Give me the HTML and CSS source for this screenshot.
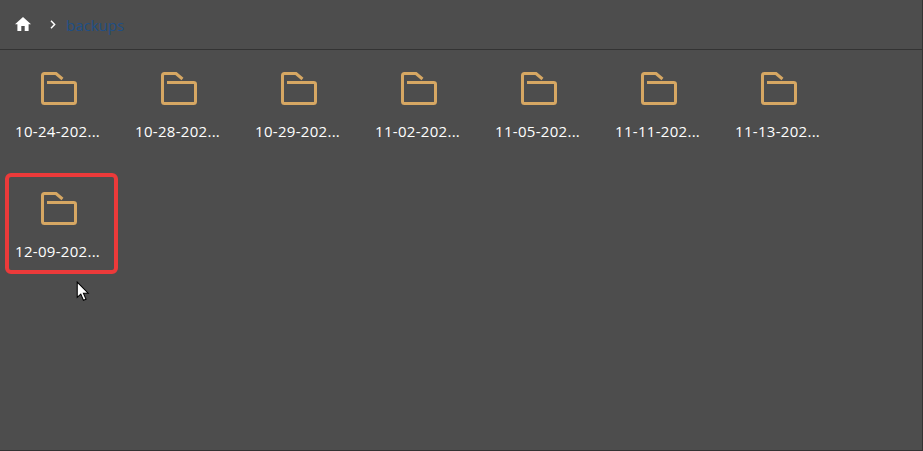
FILE: index.html
```html
<!DOCTYPE html>
<html lang="en">
<head>
  <meta charset="UTF-8" />
  <meta name="viewport" content="width=device-width, initial-scale=1.0" />
  <title>backups</title>
  <link rel="stylesheet" href="styles.css">
</head>
<body>
  <svg width="0" height="0" class="defs">
    <symbol id="folder" viewBox="0 0 38 34">
      <path d="M21.5 7 L15 1.5 H3.5 Q1.5 1.5 1.5 3.5 V29.5 Q1.5 31.5 3.5 31.5 H32.5 Q34.5 31.5 34.5 29.5 V12 Q34.5 10.5 32.5 10.5 H6" fill="none" stroke="#d6a763" stroke-width="3" />
    </symbol>
  </svg>

  <div class="page">
    <div class="crumbs">
      <svg class="home" width="16" height="14" viewBox="0 0 16 14">
        <path d="M8 0 L16 7.2 H13.6 V14 H9.7 V9 H6.3 V14 H2.4 V7.2 H0 Z" fill="#fff" />
      </svg>
      <svg class="chevron" width="6" height="9" viewBox="0 0 6 9">
        <path d="M1 .8 L4.6 4.5 L1 8.2" fill="none" stroke="#fff" stroke-width="1.5" />
      </svg>
      <a class="crumb-link" href="#">backups</a>
    </div>

    <div class="files">
      <div class="tile"><svg class="folder"><use href="#folder" /></svg><div class="name">10-24-202...</div></div>
      <div class="tile"><svg class="folder"><use href="#folder" /></svg><div class="name">10-28-202...</div></div>
      <div class="tile"><svg class="folder"><use href="#folder" /></svg><div class="name">10-29-202...</div></div>
      <div class="tile"><svg class="folder"><use href="#folder" /></svg><div class="name">11-02-202...</div></div>
      <div class="tile"><svg class="folder"><use href="#folder" /></svg><div class="name">11-05-202...</div></div>
      <div class="tile"><svg class="folder"><use href="#folder" /></svg><div class="name">11-11-202...</div></div>
      <div class="tile"><svg class="folder"><use href="#folder" /></svg><div class="name">11-13-202...</div></div>
      <div class="tile selected"><svg class="folder"><use href="#folder" /></svg><div class="name">12-09-202...</div></div>
    </div>
  </div>

  <svg class="cursor" width="14" height="21" viewBox="0 0 13 20">
    <path d="M1 1 V15.5 L4.4 12.4 L6.9 18.4 L9.4 17.3 L6.9 11.6 H11.4 Z" fill="#fff" stroke="#000" stroke-width="1" />
  </svg>
</body>
</html>
```

FILE: styles.css
```css
html, body { height: 100%; }
body {
  margin: 0;
  background: #4d4d4d;
  font-family: 'Open Sans', sans-serif;
  color: #fff;
  overflow: hidden;
  position: relative;
}
.defs { position: absolute; }
.page {
  box-sizing: border-box;
  height: 451px;
  border-right: 1px solid #333;
  border-bottom: 1px solid #333;
}
.crumbs {
  display: flex;
  align-items: center;
  height: 49px;
  padding-left: 15px;
  border-bottom: 1px solid #333;
}
.home { margin: 0 19px 2px 0; }
.chevron { margin-right: 10px; }
.crumb-link {
  color: #1f4f85;
  font-size: 15px;
  text-decoration: none;
}
.files {
  display: grid;
  grid-template-columns: repeat(7, 113px);
  grid-auto-rows: 101px;
  column-gap: 7px;
  row-gap: 19px;
  padding: 3px 0 0 5px;
}
.tile {
  box-sizing: border-box;
  padding: 19px 0 0 10px;
  border-radius: 6px;
}
.tile.selected {
  outline: 4px solid #ec3a3a;
  outline-offset: -4px;
}
.folder {
  display: block;
  width: 38px;
  height: 34px;
  margin: 0 0 0 26px;
}
.name {
  margin-top: 15px;
  font-size: 15px;
  line-height: 20px;
  letter-spacing: .3px;
  white-space: nowrap;
}
.cursor {
  position: absolute;
  left: 76px;
  top: 281px;
}
```
